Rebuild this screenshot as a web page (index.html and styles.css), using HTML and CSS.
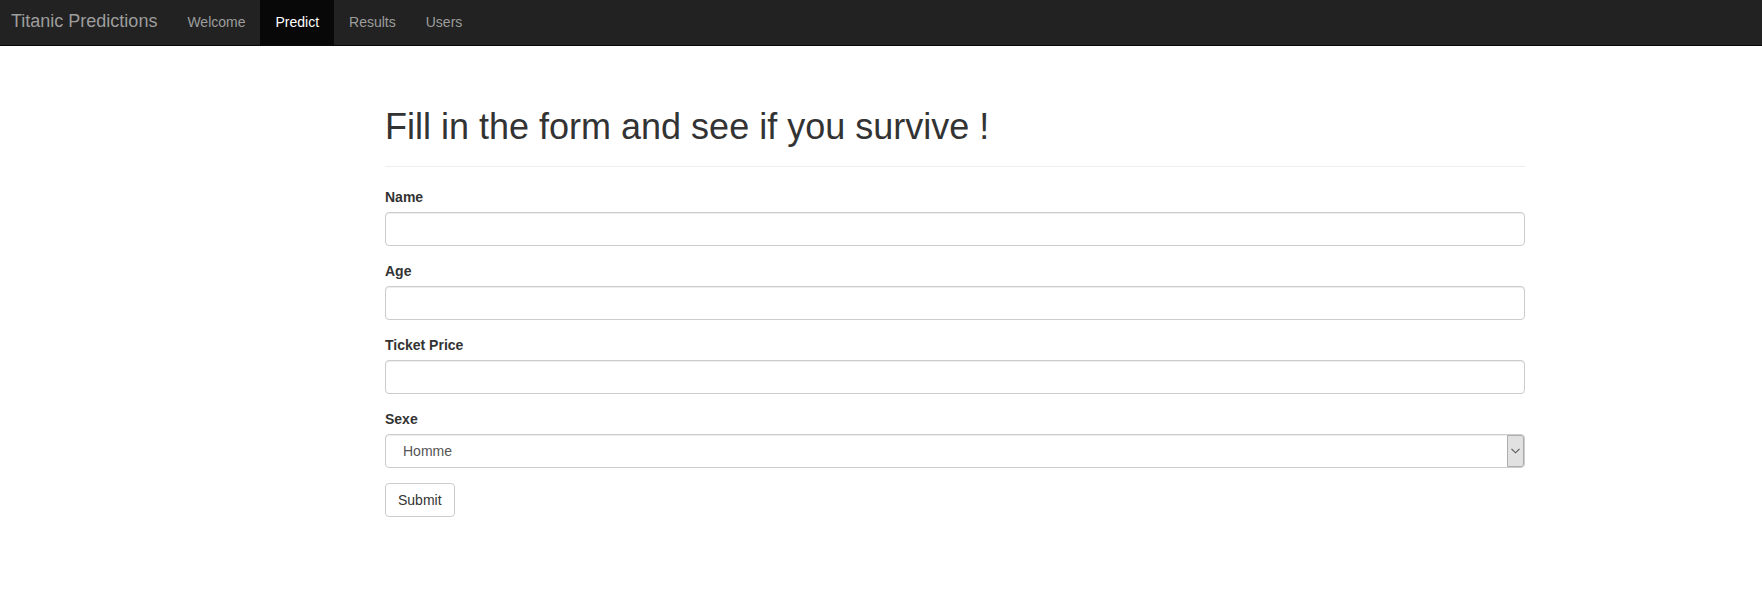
FILE: index.html
```html
<!DOCTYPE html>
<html lang="en">
<head>
<meta charset="utf-8">
<title>Titanic Predictions</title>
<link rel="stylesheet" href="styles.css">
</head>
<body>
<nav class="navbar">
  <a class="brand" href="#">Titanic Predictions</a>
  <ul class="nav">
    <li><a href="#">Welcome</a></li>
    <li class="active"><a href="#">Predict</a></li>
    <li><a href="#">Results</a></li>
    <li><a href="#">Users</a></li>
  </ul>
</nav>
<main class="container">
  <div class="page-header">
    <h1>Fill in the form and see if you survive !</h1>
  </div>
  <form class="form">
    <div class="form-group">
      <label for="name">Name</label>
      <input id="name" class="form-control" type="text">
    </div>
    <div class="form-group">
      <label for="age">Age</label>
      <input id="age" class="form-control" type="text">
    </div>
    <div class="form-group">
      <label for="price">Ticket Price</label>
      <input id="price" class="form-control" type="text">
    </div>
    <div class="form-group">
      <label for="sexe">Sexe</label>
      <div class="select-wrap">
        <select id="sexe" class="form-control select">
          <option>Homme</option>
          <option>Femme</option>
        </select>
        <span class="select-arrow"><svg width="9" height="6" viewBox="0 0 9 6"><path d="M0.5 0.8 L4.5 4.8 L8.5 0.8" fill="none" stroke="#555" stroke-width="1.1"/></svg></span>
      </div>
    </div>
    <button type="button" class="btn">Submit</button>
  </form>
</main>
</body>
</html>
```

FILE: styles.css
```css
* { box-sizing: border-box; }
html, body {
  margin: 0;
  padding: 0;
  background: #fff;
}
body {
  font-family: "Liberation Sans", Arial, Helvetica, sans-serif;
  font-size: 14px;
  line-height: 20px;
  color: #333;
}
.navbar {
  display: flex;
  align-items: stretch;
  height: 46px;
  background: #222;
  border-bottom: 1px solid #080808;
}
.brand {
  display: block;
  padding: 11px 15px 0 11px;
  font-size: 18px;
  line-height: 20px;
  color: #9d9d9d;
  text-decoration: none;
}
.nav {
  display: flex;
  list-style: none;
  margin: 0;
  padding: 0;
}
.nav li a {
  display: block;
  height: 45px;
  padding: 12px 15px 0;
  color: #9d9d9d;
  text-decoration: none;
  line-height: 20px;
}
.nav li.active a {
  background: #080808;
  color: #fff;
}
.container {
  width: 1170px;
  margin: 0 0 0 370px;
  padding: 21px 15px 0;
}
.page-header {
  margin: 40px 0 20px;
  padding-bottom: 9px;
  border-bottom: 1px solid #eee;
}
.page-header h1 {
  margin: 0 0 10px;
  font-size: 36px;
  font-weight: 500;
  line-height: 1.1;
  color: #333;
}
.form-group {
  margin-bottom: 15px;
}
label {
  display: block;
  margin-bottom: 5px;
  font-weight: bold;
}
.form-control {
  display: block;
  width: 100%;
  height: 34px;
  padding: 6px 12px;
  font-family: inherit;
  font-size: 14px;
  line-height: 20px;
  color: #555;
  background: #fff;
  border: 1px solid #ccc;
  border-radius: 4px;
  box-shadow: inset 0 1px 1px rgba(0,0,0,.075);
}
.select-wrap {
  position: relative;
}
.select {
  -webkit-appearance: none;
  appearance: none;
  padding-left: 17px;
}
.select-arrow {
  position: absolute;
  top: 1px;
  right: 1px;
  width: 17px;
  height: 32px;
  display: flex;
  align-items: center;
  justify-content: center;
  background: #e1e1e1;
  border: 1px solid #adadad;
  border-radius: 0 3px 3px 0;
  pointer-events: none;
}
.btn {
  display: inline-block;
  height: 34px;
  padding: 6px 12px;
  font-family: inherit;
  font-size: 14px;
  line-height: 20px;
  color: #333;
  background: #fff;
  border: 1px solid #ccc;
  border-radius: 4px;
}
```
